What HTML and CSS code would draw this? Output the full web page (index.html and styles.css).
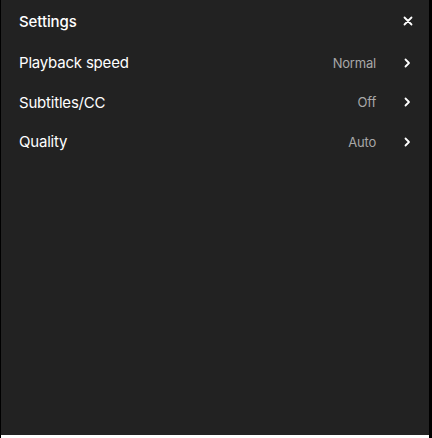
FILE: index.html
```html
<!DOCTYPE html>
<html>
<head>
<meta charset="utf-8">
<link rel="stylesheet" href="styles.css">
</head>
<body>
<div class="frame">
  <div class="panel">
    <div class="header">
      <span class="title">Settings</span>
      <button class="close" aria-label="Close">
        <svg width="10" height="10" viewBox="0 0 10 10"><path d="M1.5 1.5 L8.5 8.5 M8.5 1.5 L1.5 8.5" stroke="#fff" stroke-width="1.8" stroke-linecap="round"/></svg>
      </button>
    </div>
    <ul class="menu">
      <li class="item"><span class="label">Playback speed</span><span class="value">Normal</span><span class="chev"><svg width="8" height="10" viewBox="0 0 8 10"><path d="M2.5 1.5 L6 5 L2.5 8.5" fill="none" stroke="#fff" stroke-width="1.8" stroke-linecap="round" stroke-linejoin="round"/></svg></span></li>
      <li class="item"><span class="label">Subtitles/CC</span><span class="value">Off</span><span class="chev"><svg width="8" height="10" viewBox="0 0 8 10"><path d="M2.5 1.5 L6 5 L2.5 8.5" fill="none" stroke="#fff" stroke-width="1.8" stroke-linecap="round" stroke-linejoin="round"/></svg></span></li>
      <li class="item"><span class="label">Quality</span><span class="value">Auto</span><span class="chev"><svg width="8" height="10" viewBox="0 0 8 10"><path d="M2.5 1.5 L6 5 L2.5 8.5" fill="none" stroke="#fff" stroke-width="1.8" stroke-linecap="round" stroke-linejoin="round"/></svg></span></li>
    </ul>
  </div>
</div>
</body>
</html>
```

FILE: styles.css
```css
html, body {
  margin: 0;
  padding: 0;
  background: #fff;
}
.frame {
  height: 438px;
  border-left: 1px solid #000;
  border-right: 3px solid #000;
  box-sizing: border-box;
  background: #fff;
}
.panel {
  height: 435px;
  background: #222;
  font-family: Inter, "Liberation Sans", sans-serif;
  color: #fff;
}
.header {
  height: 42px;
  display: flex;
  align-items: center;
  justify-content: space-between;
  padding: 0 15px 0 18px;
}
.title {
  font-size: 15px;
  font-weight: 500;
  letter-spacing: -0.1px;
}
.close {
  background: none;
  border: none;
  padding: 0;
  width: 12px;
  height: 12px;
  display: flex;
  align-items: center;
  justify-content: center;
}
.menu {
  list-style: none;
  margin: 0;
  padding: 1px 0 0;
}
.item {
  height: 39.5px;
  display: flex;
  align-items: center;
  padding: 0 17px 0 18px;
}
.label {
  font-size: 15px;
  letter-spacing: -0.2px;
  flex: 1;
}
.value {
  font-size: 13px;
  letter-spacing: -0.2px;
  color: #a8a8a8;
  margin-right: 26px;
}
.chev {
  display: flex;
  width: 10px;
  justify-content: center;
}
```
